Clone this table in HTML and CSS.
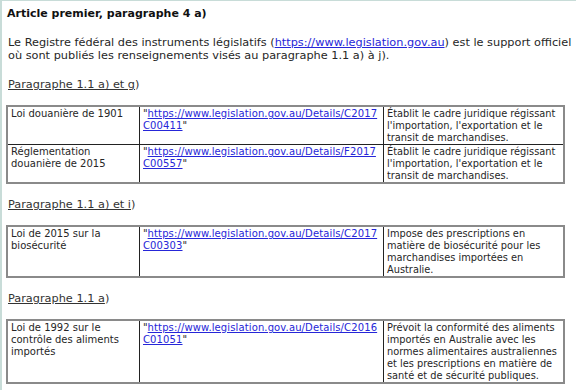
FILE: index.html
```html
<!DOCTYPE html>
<html lang="fr">
<head>
<meta charset="utf-8">
<link rel="stylesheet" href="styles.css">
</head>
<body>
<div class="page">
  <h1 class="title">Article premier, paragraphe 4 a)</h1>
  <p class="intro">Le Registre fédéral des instruments législatifs (<a href="#">https://www.legislation.gov.au</a>) est le support officiel où sont publiés les renseignements visés au paragraphe 1.1 a) à j).</p>

  <h2 class="sub sub-first"><u>Paragraphe 1.1 a) et g</u>)</h2>
  <table class="laws">
    <colgroup><col class="c1"><col class="c2"><col class="c3"></colgroup>
    <tr>
      <td>Loi douanière de 1901</td>
      <td>"<a class="url" href="#">https://www.legislation.gov.au/Details/C2017<br>C00411</a>"</td>
      <td class="desc">Établit le cadre juridique régissant l'importation, l'exportation et le transit de marchandises.</td>
    </tr>
    <tr>
      <td>Réglementation douanière de 2015</td>
      <td>"<a class="url" href="#">https://www.legislation.gov.au/Details/F2017<br>C00557</a>"</td>
      <td class="desc">Établit le cadre juridique régissant l'importation, l'exportation et le transit de marchandises.</td>
    </tr>
  </table>

  <h2 class="sub"><u>Paragraphe 1.1 a) et i</u>)</h2>
  <table class="laws">
    <colgroup><col class="c1"><col class="c2"><col class="c3"></colgroup>
    <tr class="r4">
      <td>Loi de 2015 sur la biosécurité</td>
      <td>"<a class="url" href="#">https://www.legislation.gov.au/Details/C2017<br>C00303</a>"</td>
      <td class="desc">Impose des prescriptions en matière de biosécurité pour les marchandises importées en Australie.</td>
    </tr>
  </table>

  <h2 class="sub"><u>Paragraphe 1.1 a</u>)</h2>
  <table class="laws">
    <colgroup><col class="c1"><col class="c2"><col class="c3"></colgroup>
    <tr>
      <td>Loi de 1992 sur le contrôle des aliments importés</td>
      <td>"<a class="url" href="#">https://www.legislation.gov.au/Details/C2016<br>C01051</a>"</td>
      <td class="desc">Prévoit la conformité des aliments importés en Australie avec les normes alimentaires australiennes et les prescriptions en matière de santé et de sécurité publiques.</td>
    </tr>
  </table>
</div>
</body>
</html>
```

FILE: styles.css
```css
html, body {
  margin: 0;
  padding: 0;
  background: #ffffff;
}
body {
  width: 576px;
  height: 391px;
  overflow: hidden;
  font-family: "DejaVu Sans", Verdana, sans-serif;
  color: #262626;
}
.page {
  border-left: 2px solid #c8dcd8;
  border-top: 1px solid #c8dcd8;
  padding: 0 0 0 4px;
  height: 390px;
  box-sizing: border-box;
}
a {
  color: #2626d8;
  text-decoration: underline;
}
.title {
  margin: 6px 0 0 1px;
  font-size: 11px;
  line-height: 14px;
  font-weight: bold;
  color: #111;
}
.intro {
  margin: 15px 0 0 2px;
  max-width: 564px;
  font-size: 11.3px;
  line-height: 13px;
}
.sub {
  margin: 14px 0 14px 2px;
  font-size: 11.3px;
  line-height: 13px;
  font-weight: normal;
  color: #333;
}
.sub-first {
  margin-top: 16px;
}
.laws {
  width: 559px;
  border-collapse: separate;
  border-spacing: 0;
  border: 2px solid #8a8a8a;
  table-layout: fixed;
  font-size: 10px;
  line-height: 12px;
}
.c1 { width: 131px; }
.c2 { width: 244px; }
.c3 { width: auto; }
.laws td {
  vertical-align: top;
  padding: 1px 2px 0 3px;
  border-top: 1px solid #222;
  border-left: 1px solid #222;
  height: 36px;
}
.laws tr:first-child td {
  border-top: none;
}
.laws td:first-child {
  border-left: none;
}
.laws tr.r4 td {
  height: 48px;
}
.laws td.desc {
  font-size: 9.8px;
  padding-right: 0;
}
.url {
  letter-spacing: 0.12px;
}
```
